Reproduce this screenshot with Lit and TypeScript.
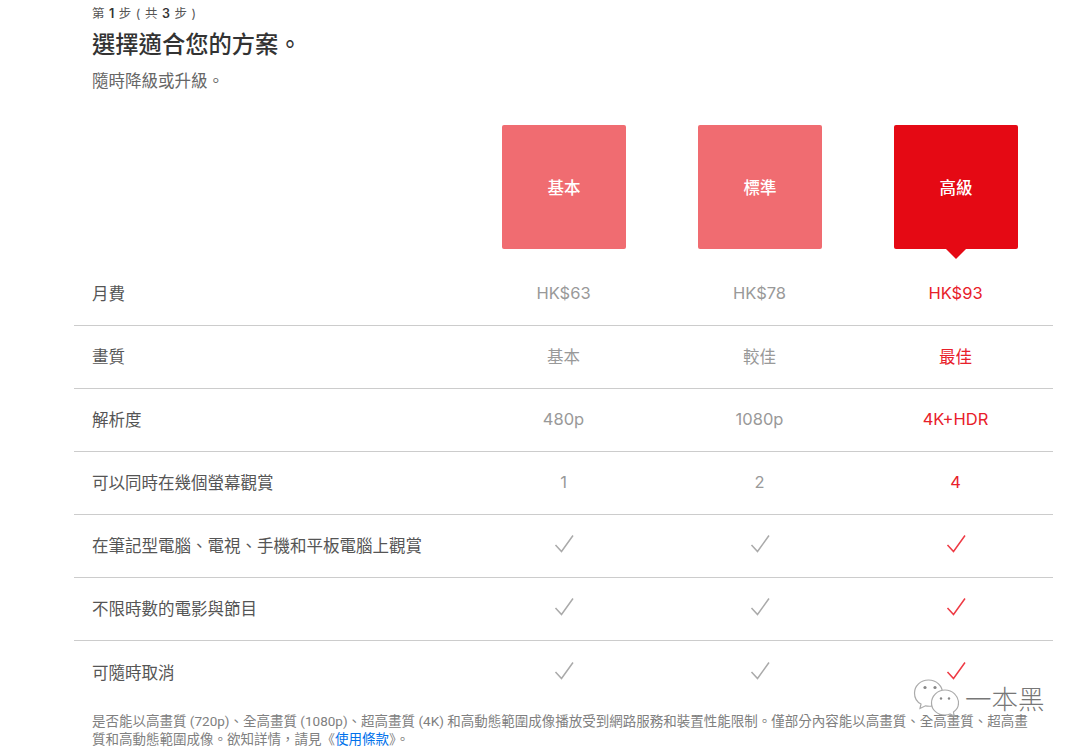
import { LitElement, html, css, svg } from "lit";
import { customElement } from "lit/decorators.js";

const rows: [string, string, string, string][] = [
  ["月費", "HK$63", "HK$78", "HK$93"],
  ["畫質", "基本", "較佳", "最佳"],
  ["解析度", "480p", "1080p", "4K+HDR"],
  ["可以同時在幾個螢幕觀賞", "1", "2", "4"],
  ["在筆記型電腦、電視、手機和平板電腦上觀賞", "✓", "✓", "✓"],
  ["不限時數的電影與節目", "✓", "✓", "✓"],
  ["可隨時取消", "✓", "✓", "✓"],
];

const check = svg`<svg class="check" width="20" height="20" viewBox="0 0 20 20"><path d="M1.5 11 L7.5 17.5 L19 1.5" fill="none" stroke="currentColor" stroke-width="1.5"/></svg>`;

@customElement("app-root")
export class AppRoot extends LitElement {
  static styles = css`
    :host {
      display: block;
      position: relative;
      width: 1080px;
      height: 748px;
      overflow: hidden;
      background: #fff;
      color: #333;
      font-family: Inter, "Noto Sans CJK TC", sans-serif;
    }
    .wrap { width: 979px; padding: 5px 0 0 74px; }
    .intro { padding-left: 18px; }
    .step { font-size: 12.5px; line-height: 18px; color: #555; word-spacing: 1px; }
    .step b { font-weight: 600; color: #333; }
    h1 { margin: 4px 0 0; font-size: 23.3px; line-height: 36px; font-weight: 500; color: #333; }
    .sub { margin-top: 6px; font-size: 16.5px; line-height: 24px; color: #666; }
    .plans {
      display: grid;
      grid-template-columns: 392px repeat(3, 196px);
      margin-top: 32px;
    }
    .plan { display: flex; justify-content: center; }
    .box {
      position: relative;
      width: 124px;
      height: 124px;
      border-radius: 2px;
      background: #f06c71;
      color: #fff;
      font-size: 16.5px;
      font-weight: 500;
      display: flex;
      align-items: center;
      justify-content: center;
    }
    .box.on { background: #e50914; }
    .box.on::after {
      content: "";
      position: absolute;
      left: 50%;
      top: 100%;
      margin-left: -10px;
      border-style: solid;
      border-width: 10px 10px 0 10px;
      border-color: #e50914 transparent transparent transparent;
    }
    .rows { margin-top: 13px; }
    .row {
      display: grid;
      grid-template-columns: 392px repeat(3, 196px);
      height: 63px;
      padding-bottom: 2px;
      box-sizing: border-box;
      align-items: center;
      border-bottom: 1px solid #ccc;
      font-size: 16.5px;
    }
    .row.first { height: 64px; padding-bottom: 1px; }
    .row.last { border-bottom: none; }
    .label { padding-left: 18px; color: #555; }
    .cell { text-align: center; font-weight: 400; padding-right: 1px; }
    .cell.on { color: #e8202a; }
    .cell.off { color: #999; }
    .cell.off .check { color: #aaa; }
    .cell.on .check { color: #ee3a44; }
    .check { display: block; margin: -2px auto 0; }
    .note {
      position: absolute;
      left: 92px;
      top: 712px;
      width: 940px;
      font-family: Roboto, "Noto Sans CJK TC", sans-serif;
      font-size: 13.5px;
      line-height: 18px;
      color: #808080;
      margin: 0;
    }
    .note a { color: #0071eb; text-decoration: none; }
    .mark {
      position: absolute;
      left: 913px;
      top: 679px;
      display: flex;
      align-items: center;
      gap: 6px;
      color: #777;
    }
    .mark span {
      font-family: "Noto Sans CJK TC", sans-serif;
      font-size: 26.5px;
      line-height: 38px;
      font-weight: 300;
    }
  `;

  render() {
    return html`
      <div class="wrap">
        <div class="intro">
          <div class="step">第 <b>1</b> 步 ( 共 <b>3</b> 步 )</div>
          <h1>選擇適合您的方案。</h1>
          <div class="sub">隨時降級或升級。</div>
        </div>
        <div class="plans">
          <div></div>
          <div class="plan"><div class="box">基本</div></div>
          <div class="plan"><div class="box">標準</div></div>
          <div class="plan"><div class="box on">高級</div></div>
        </div>
        <div class="rows">
          ${rows.map(
            (r, i) => html`<div class="row ${i === 0 ? "first" : ""} ${i === rows.length - 1 ? "last" : ""}">
              <div class="label">${r[0]}</div>
              ${[1, 2, 3].map(
                (c) => html`<div class="cell ${c === 3 ? "on" : "off"}">${r[c] === "✓" ? check : r[c]}</div>`
              )}
            </div>`
          )}
        </div>
      </div>
      <p class="note">是否能以高畫質 (720p)、全高畫質 (1080p)、超高畫質 (4K) 和高動態範圍成像播放受到網路服務和裝置性能限制。僅部分內容能以高畫質、全高畫質、超高畫質和高動態範圍成像。欲知詳情，請見《<a>使用條款</a>》。</p>
      <div class="mark">
        <svg width="46" height="38" viewBox="0 0 46 38" fill="#fff" stroke="#aaa" stroke-width="1.2">
          <path d="M15.5 1 C7.5 1 1.5 7 1.5 14 C1.5 19 4 23 8 25 L7 29.5 L12.5 26.8 C14 27.2 16 27.3 18 27.2 C24 26 29.5 21 29.5 14 C29.5 7 23.5 1 15.5 1 Z"/>
          <path d="M32 11 C24.5 11 18.5 17 18.5 24 C18.5 31 24.5 36 32 36 C34 36 36 35.6 37 35 L41 37 L40.5 33 C43.5 31 45.5 27.5 45.5 24 C45.5 17 39.5 11 32 11 Z"/>
          <circle cx="12" cy="8.5" r="1.6" fill="#888" stroke="none"/>
          <circle cx="22" cy="8.5" r="1.6" fill="#888" stroke="none"/>
          <circle cx="28" cy="19.5" r="1.2" fill="#888" stroke="none"/>
          <circle cx="36" cy="19.5" r="1.2" fill="#888" stroke="none"/>
        </svg>
        <span>一本黑</span>
      </div>
    `;
  }
}
